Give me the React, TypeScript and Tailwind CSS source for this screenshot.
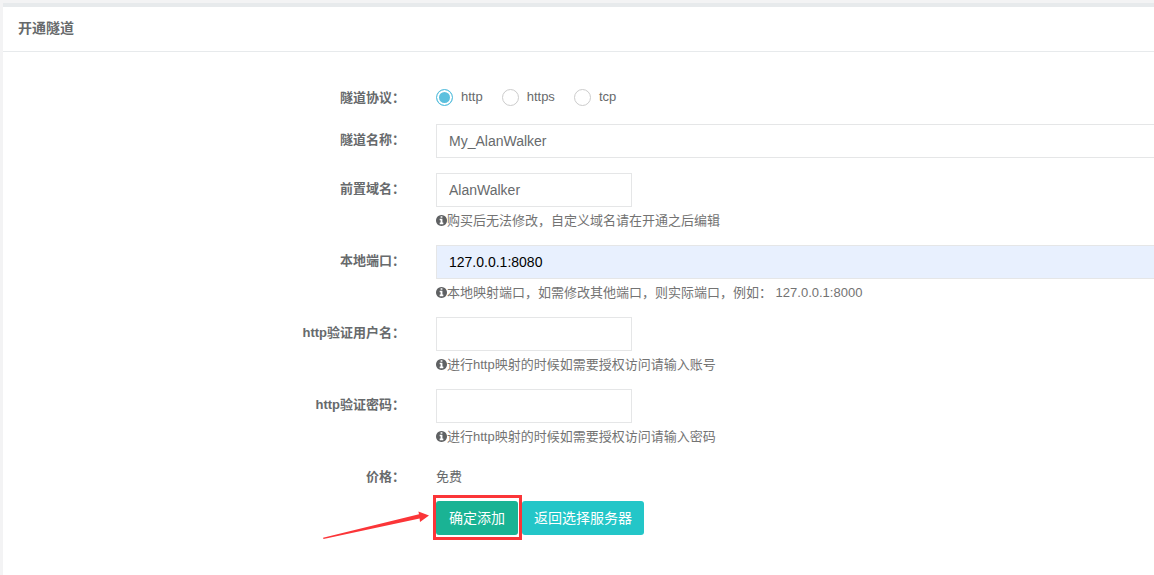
import type { ReactNode } from 'react';

const rowClass = 'grid grid-cols-[402px_minmax(0,1fr)] gap-[31px]';
const labelClass = 'pt-[7px] text-right text-[13px] leading-[18px] font-bold';
const inputClass =
  'block h-[34px] border border-[#e5e6e7] px-3 text-[14px] leading-5 outline-none focus:border-[#1ab394]';

function InfoIcon() {
  return (
    <svg className="size-[11px] shrink-0 text-[#5f6163]" viewBox="128 128 1536 1536" fill="currentColor" aria-hidden="true">
      <path d="M1152 1376v-160q0-14-9-23t-23-9h-96v-512q0-14-9-23t-23-9h-320q-14 0-23 9t-9 23v160q0 14 9 23t23 9h96v320h-96q-14 0-23 9t-9 23v160q0 14 9 23t23 9h448q14 0 23-9t9-23zm-128-896v-160q0-14-9-23t-23-9h-192q-14 0-23 9t-9 23v160q0 14 9 23t23 9h192q14 0 23-9t9-23zm640 416q0 209-103 385.5t-279.5 279.5-385.5 103-385.5-103-279.5-279.5-103-385.5 103-385.5 279.5-279.5 385.5-103 385.5 103 279.5 279.5 103 385.5z" />
    </svg>
  );
}

function Hint({ id, children }: { id: string; children: ReactNode }) {
  return (
    <p id={id} className="mt-1 flex items-center text-[13px] leading-[19px] text-[#737373]">
      <InfoIcon />
      <span>{children}</span>
    </p>
  );
}

type FieldProps = {
  id: string;
  label: string;
  value?: string;
  type?: string;
  wide?: boolean;
  filled?: boolean;
  hint?: ReactNode;
};

function Field({ id, label, value = '', type = 'text', wide, filled, hint }: FieldProps) {
  const width = wide ? 'w-full border-r-0' : 'w-[196px]';
  const tone = filled ? 'bg-[#e8f0fe] text-black' : 'bg-white text-[#676a6c]';
  return (
    <div className={rowClass}>
      <label htmlFor={id} className={labelClass}>
        {label}
      </label>
      <div>
        <input
          id={id}
          type={type}
          defaultValue={value}
          aria-describedby={hint ? `${id}-hint` : undefined}
          className={`${inputClass} ${width} ${tone}`}
        />
        {hint && <Hint id={`${id}-hint`}>{hint}</Hint>}
      </div>
    </div>
  );
}

const protocols = ['http', 'https', 'tcp'];

export default function App() {
  return (
    <div className="flex min-h-screen flex-col bg-[#f3f3f4] pt-[3px] pl-[3px] font-['Liberation_Sans','Noto_Sans_CJK_SC',sans-serif] text-[13px] text-[#676a6c]">
      <main className="flex-1 border-t-4 border-[#e7eaec] bg-white">
        <header className="flex h-[45px] items-center border-b border-[#e7eaec] px-[15px] pb-[3px]">
          <h1 className="text-[14px] leading-5 font-bold">开通隧道</h1>
        </header>
        <form className="flex flex-col gap-[15px] pt-[30px] pb-10" onSubmit={(e) => e.preventDefault()}>
          <div className={rowClass} role="radiogroup" aria-labelledby="protocol-label">
            <span id="protocol-label" className={labelClass}>
              隧道协议：
            </span>
            <div className="flex h-[27px] items-end gap-[19px] pb-[3px]">
              {protocols.map((name) => (
                <label key={name} className="flex items-center gap-2 leading-[18px]">
                  <input
                    type="radio"
                    name="protocol"
                    value={name}
                    defaultChecked={name === 'http'}
                    className="size-[17px] appearance-none rounded-full border border-[#cccccc] bg-white checked:border-[#5bc0de] checked:bg-[#5bc0de] checked:shadow-[inset_0_0_0_2px_white]"
                  />
                  {name}
                </label>
              ))}
            </div>
          </div>
          <Field id="name" label="隧道名称：" value="My_AlanWalker" wide />
          <Field
            id="domain"
            label="前置域名："
            value="AlanWalker"
            hint="购买后无法修改，自定义域名请在开通之后编辑"
          />
          <Field
            id="port"
            label="本地端口："
            value="127.0.0.1:8080"
            wide
            filled
            hint="本地映射端口，如需修改其他端口，则实际端口，例如： 127.0.0.1:8000"
          />
          <Field id="user" label="http验证用户名：" hint="进行http映射的时候如需要授权访问请输入账号" />
          <Field
            id="password"
            type="password"
            label="http验证密码："
            hint="进行http映射的时候如需要授权访问请输入密码"
          />
          <div className={rowClass}>
            <span className={labelClass}>价格：</span>
            <span className="pt-[7px] leading-[18px]">免费</span>
          </div>
          <div className={rowClass}>
            <span />
            <div className="flex gap-1 text-[14px] leading-5 text-white">
              <div className="relative">
                <button type="submit" className="h-[34px] rounded-[3px] bg-[#1ab394] px-[13px]">
                  确定添加
                </button>
                <div className="pointer-events-none absolute -top-[6px] -right-1 -bottom-[5px] -left-[3px] border-3 border-[#fb3538]" />
                <svg
                  className="pointer-events-none absolute top-[10px] right-full mr-[7px] h-7 w-[106px]"
                  viewBox="0 0 106 28"
                  aria-hidden="true"
                >
                  <path d="M0 26.8 L96 3.2 L95.4 .6 L106 4.4 L97 11 L96.6 7.4 L0.5 28 Z" fill="#fb3538" />
                </svg>
              </div>
              <button type="button" className="h-[34px] rounded-[3px] bg-[#23c6c8] px-3">
                返回选择服务器
              </button>
            </div>
          </div>
        </form>
      </main>
    </div>
  );
}
